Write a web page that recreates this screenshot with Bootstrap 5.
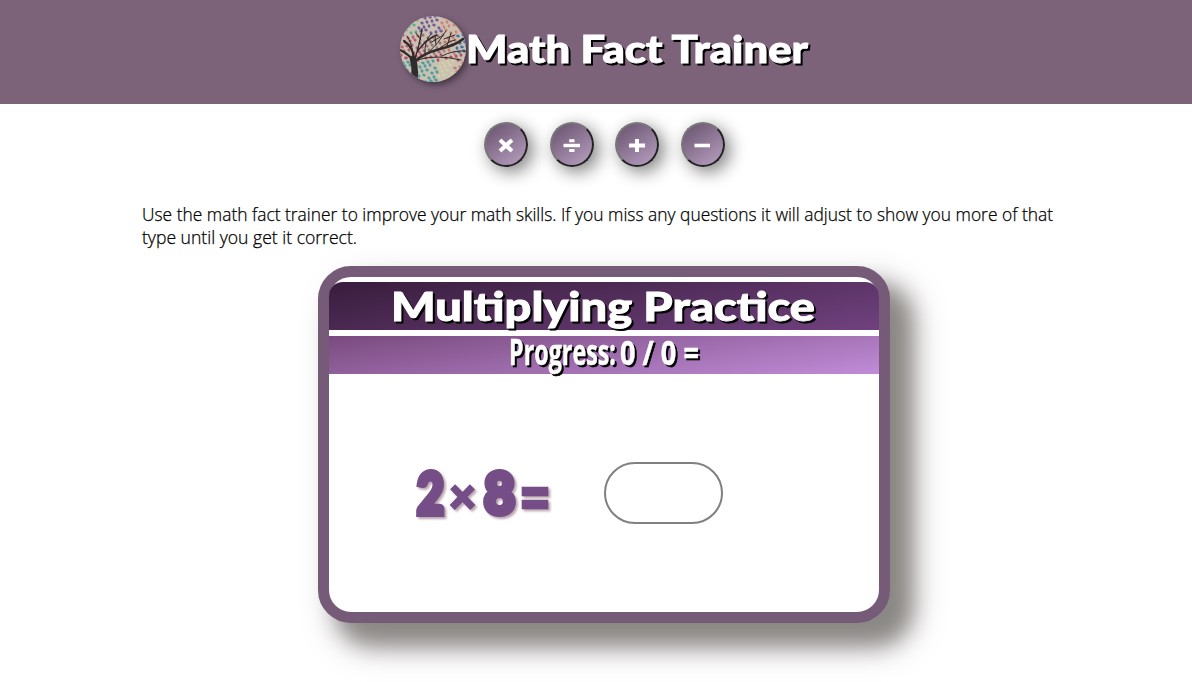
<!DOCTYPE html>
<html lang="en">
<head>
<meta charset="utf-8">
<meta name="viewport" content="width=device-width, initial-scale=1">
<title>Math Fact Trainer</title>
<link href="https://cdn.jsdelivr.net/npm/bootstrap@5.3.0/dist/css/bootstrap.min.css" rel="stylesheet">
<style>
body{background:#fff;color:#000;font-family:"Open Sans","Noto Sans",sans-serif;min-height:100vh;overflow:hidden}
.site-header{height:104px;background:#7c637a;padding:16px 0 0 400px}
.logo{width:66px;height:66px;border-radius:50%;box-shadow:3px 3px 6px rgba(40,30,40,.65);flex:none}
svg{display:block;overflow:visible}
.display-text{font-family:Lato,"Open Sans",sans-serif;font-weight:900;fill:#fff;stroke:#fff;stroke-width:.9;filter:drop-shadow(2px 2px .5px #000)}
.ops{height:84px;padding:18px 0 0 484px;gap:21.6px}
.op{width:44px;height:45px;padding:0;border:2px solid;border-color:#777 #222 #222 #777;border-radius:50%;background:linear-gradient(145deg,#67516c,#b9a0c2);box-shadow:5px 5px 17px #808080}
.op svg{width:40px;height:41px}
.intro{margin:16px 0 0 142px;width:930px;line-height:23px;font-weight:300}
.intro text{stroke:#000;stroke-width:.25}
.practice{margin:16px 0 0 318px;width:572px;height:357px;border:11px solid #765b79;border-radius:33px;background:#fff;box-shadow:20px 20px 22px #8a8884,20px 20px 36px #b0a8ac;padding-top:5px}
.bar-title{height:48px;border-radius:14px 14px 0 0;background:linear-gradient(170deg,#381d3c,#70417f)}
.bar-progress{height:38px;margin-top:6px;background:linear-gradient(172deg,#794a7e,#c08cd8)}
.progress-text{font-family:"Open Sans","Noto Sans",sans-serif;font-weight:700;fill:#fff;stroke:#fff;stroke-width:.5;filter:drop-shadow(2px 2px .5px #000)}
.question{padding:88px 0 0 87px}
.sum{font-family:Lato,sans-serif;font-weight:900;fill:#754d87;stroke:#754d87;stroke-linejoin:miter;filter:drop-shadow(2px 2px 1px #b9a5ad)}
.digit{stroke-width:6}
.sign{stroke-width:2.4}
.answer{width:119px;height:62px;margin-left:54px;border:2px solid #808080;border-radius:31px;background:#fff}
</style>
</head>
<body>
<header class="site-header d-flex">
 <svg class="logo" viewBox="0 0 66 66">
  <defs>
   <clipPath id="disc"><circle cx="33" cy="33" r="33"/></clipPath>
  </defs>
  <g clip-path="url(#disc)">
   <rect width="66" height="66" fill="#c9c2b3"/>
   <g id="leaves"></g>
   <g fill="none" stroke="#302c2b" stroke-linecap="round">
    <path d="M14 66Q16 54 13 43" stroke-width="6.5"/>
    <path d="M13 45Q9 38 0 34M14 45Q14 31 4 25" stroke-width="2.2"/>
    <path d="M14 45Q19 32 22 13M17 36Q26 23 37 19" stroke-width="1.4"/>
    <path d="M14 46Q24 37 40 33T63 23" stroke-width="2.7"/>
    <path d="M17 44Q36 38 61 44M27 38Q39 27 46 15M25 38Q24 25 31 18M39 33Q49 25 55 24M42 40Q53 34 66 35M13 40Q12 26 7 20M21 24L16 17M36 29L35 19M47 30L51 17M30 27L42 20M44 23L55 19" stroke-width="1"/>
   </g>
  </g>
 </svg>
 <h1 class="m-0"><svg width="343" height="66"><text class="display-text" x="0" y="47" font-size="37" textLength="342" lengthAdjust="spacingAndGlyphs">Math Fact Trainer</text></svg></h1>
</header>

<nav class="ops d-flex align-items-start" aria-label="Operations">
 <button class="btn op" aria-label="Multiply"><svg viewBox="0 0 40 41"><path d="M14 16L26 27M26 16L14 27" stroke="#fff" stroke-width="4"/></svg></button>
 <button class="btn op" aria-label="Divide"><svg viewBox="0 0 40 41"><path d="M11.5 21.5H28" stroke="#fff" stroke-width="3.4"/><path d="M17.2 16.8H22.5M17.2 26.5H22.5" stroke="#fff" stroke-width="3"/></svg></button>
 <button class="btn op" aria-label="Add"><svg viewBox="0 0 40 41"><path d="M12 21.5H28M20 15V28" stroke="#fff" stroke-width="4"/></svg></button>
 <button class="btn op" aria-label="Subtract"><svg viewBox="0 0 40 41"><path d="M11.5 21.5H27" stroke="#fff" stroke-width="3.6"/></svg></button>
</nav>

<main>
 <p class="intro mb-0"><svg width="914" height="46" font-size="17.5"><text y="17" textLength="911" lengthAdjust="spacingAndGlyphs">Use the math fact trainer to improve your math skills. If you miss any questions it will adjust to show you more of that</text><text y="40" textLength="215" lengthAdjust="spacingAndGlyphs">type until you get it correct.</text></svg></p>
 <section class="practice">
  <h2 class="bar-title m-0"><svg width="550" height="48"><text class="display-text" x="62" y="39" font-size="40" textLength="424" lengthAdjust="spacingAndGlyphs">Multiplying Practice</text></svg></h2>
  <div class="bar-progress"><svg width="550" height="38"><g class="progress-text"><text x="180" y="29" font-size="36" textLength="107" lengthAdjust="spacingAndGlyphs">Progress:</text><text x="291" y="29" font-size="34" textLength="79" lengthAdjust="spacingAndGlyphs">0 / 0 =</text></g></svg></div>
  <div class="question d-flex">
   <svg width="134" height="62"><g class="sum"><text class="digit" x="1" y="52" font-size="58" textLength="27" lengthAdjust="spacingAndGlyphs">2</text><text class="sign" x="33" y="51" font-size="47" textLength="27" lengthAdjust="spacingAndGlyphs">×</text><text class="digit" x="68" y="52" font-size="58" textLength="31" lengthAdjust="spacingAndGlyphs">8</text><text class="sign" x="103" y="60" font-size="70" textLength="32" lengthAdjust="spacingAndGlyphs">=</text></g></svg>
   <input class="form-control answer" type="text" aria-label="Answer">
  </div>
 </section>
</main>
<script src="https://cdn.jsdelivr.net/npm/bootstrap@5.3.0/dist/js/bootstrap.bundle.min.js"></script>
<script>
// Painted leaves, with a colour family for each part of the canopy
const leaves = document.getElementById('leaves');
for (let r = 0; r < 14; r++) for (let c = 0; c < 14; c++) {
  const x = c * 5 + (r * 7 % 5), y = r * 5 + ((c * 7 + r * 3) % 4) - 1;
  let colour = '#b94c68';
  if (y < 19) colour = x > 41 ? '#d18478' : x > 17 ? '#75599b' : '#65aa8e';
  else if (y < 38) colour = x > 56 ? '#456fa5' : x > 40 ? '#c77870' : x > 22 ? '#a17278' : '#b95d74';
  else if (y > 44) colour = x > 53 ? '#c77972' : x > 37 ? '#d4d0a1' : '#4e9e9f';
  const leaf = document.createElementNS('http://www.w3.org/2000/svg', 'ellipse');
  for (const [k, v] of Object.entries({cx:x, cy:y, rx:1.8, ry:1.4, fill:colour, transform:`rotate(${(r*31+c*23)%90} ${x} ${y})`})) leaf.setAttribute(k, v);
  leaves.append(leaf);
}
</script>
</body>
</html>
